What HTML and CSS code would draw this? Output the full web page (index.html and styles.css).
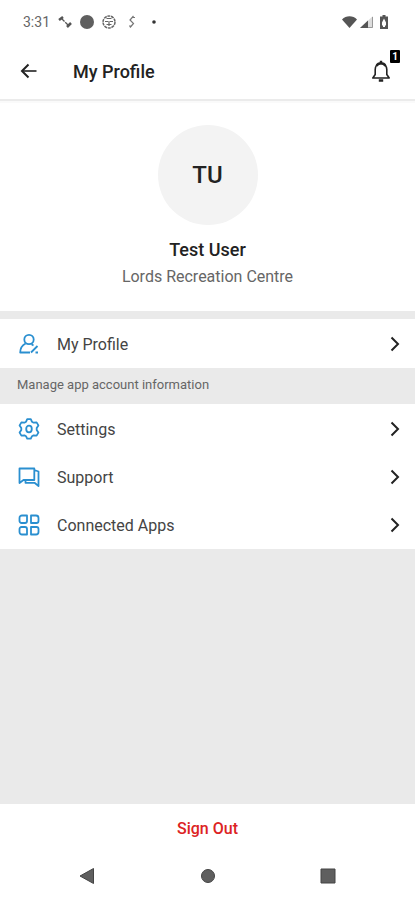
FILE: index.html
```
<!DOCTYPE html>
<html lang="en">
<head>
  <meta charset="UTF-8">
  <meta name="viewport" content="width=device-width, initial-scale=1.0">
  <title>My Profile</title>
  <link rel="stylesheet" href="styles.css">
</head>
<body>
  <div class="status-bar">
    <span class="time">3:31</span>
    <svg width="14" height="14" viewBox="0 0 14 14" fill="none" stroke="#555"><path d="M3 3l8 8" stroke-width="1.3" stroke-dasharray="5 1"/><path d="M1 5l4-3M9 12l4-4" stroke-width="2.500"/></svg>
    <svg width="14" height="14" viewBox="0 0 14 14"><circle cx="7" cy="7" r="7" fill="#5f5f5f"/></svg>
    <svg width="14" height="14" viewBox="0 0 14 14" fill="none" stroke="#666"><circle cx="7" cy="7" r="6" stroke-width="1.500" stroke-dasharray="3 .7"/><path d="M3 6.500h3M8 6.500h3M4.500 3.500h5M7 6v5M4.500 9.500h5" stroke-width="1.200"/></svg>
    <svg class="bolt-icon" width="8" height="14" viewBox="0 0 8 14" fill="none" stroke="#777"><path d="M5.500 1L2 5l3.500 3.500L2 12.500M4 2.500h3M1 11h3" stroke-width="1.200"/></svg>
    <svg width="4" height="4" viewBox="0 0 4 4"><circle cx="2" cy="2" r="1.800" fill="#333"/></svg>
    <div class="status-right">
      <svg width="15" height="12" viewBox="0 0 15 12"><path d="M0 3.500C4-.8 11-.8 15 3.500L7.500 12z" fill="#555"/></svg>
      <svg width="13" height="12" viewBox="0 0 13 12"><path d="M13 0v12H0z" fill="#ddd"/><path d="M8 4.600V12H0z" fill="#555"/><path d="M12.500 1v10.500H8" fill="none" stroke="#999"/></svg>
      <svg class="battery-icon" width="8" height="14" viewBox="0 0 8 14"><path d="M2.500 0h3v1.500H8V14H0V1.500h2.500z" fill="#555"/><path d="M4 3.500L6 7.500v3H5v1.500H3v-1.500H2v-3z" fill="#fff"/></svg>
    </div>
  </div>

  <header class="header">
    <button class="icon-btn" aria-label="Back">
      <svg width="18" height="16" viewBox="0 0 18 16" fill="none" stroke="#222"><path d="M8.500 1.500L2 8l6.500 6.500" stroke-width="2"/><path d="M2 8h14.500" stroke-width="1.600"/></svg>
    </button>
    <h1>My Profile</h1>
    <button class="icon-btn bell" aria-label="Notifications">
      <svg width="20" height="22" viewBox="0 0 20 22" fill="none" stroke="#222" stroke-width="1.600"><path d="M1.800 18h16.400l-2.400-3.500V9.500C15.800 6 13.500 3.500 10 3.500S4.200 6 4.200 9.500v5z" stroke-linejoin="round"/><path d="M5.500 6C6.500 4.200 8 3.300 10 3.300s3.500.9 4.500 2.700M10 .8v2.500M7.800 20.500h4.400" stroke-width="2.400"/></svg>
      <span class="badge">1</span>
    </button>
  </header>

  <main>
    <section class="profile">
      <div class="avatar">TU</div>
      <h2>Test User</h2>
      <p>Lords Recreation Centre</p>
    </section>

    <nav class="menu">
      <a class="row" href="#profile">
        <svg class="row-icon" viewBox="0 0 22 22"><circle cx="11" cy="6.500" r="4.700"/><path d="M7.600 10.500C4.200 12.300 2.200 15.500 2.200 19.500H12M13.500 11.200l2 1.200M13 19.500l6.500-6.500M17.500 19.500h2.500"/></svg>
        <span>My Profile</span>
        <svg class="chevron" viewBox="0 0 10 16"><path d="M1.500 1.500L8 8l-6.500 6.500"/></svg>
      </a>
    </nav>

    <p class="note">Manage app account information</p>

    <nav class="menu">
      <a class="row" href="#settings">
        <svg class="row-icon" viewBox="0 0 22 22"><path d="M8 3.800L9.200 1.200h3.600L14 3.800l1.600.9 3-.3 1.800 3-1.700 2.600v2l1.700 2.600-1.800 3-3-.3-1.600.9-1.200 2.500H9.200L8 18.200l-1.600-.9-3 .3-1.800-3L3.300 12v-2L1.600 7.400l1.800-3 3 .3z"/><ellipse cx="11" cy="11" rx="2.800" ry="3.300"/></svg>
        <span>Settings</span>
        <svg class="chevron" viewBox="0 0 10 16"><path d="M1.500 1.500L8 8l-6.500 6.500"/></svg>
      </a>
      <a class="row" href="#support">
        <svg class="row-icon" viewBox="0 0 22 22"><path d="M1.500 17V2.500h14.800v11.500H5.500zM16.300 4l4.200 1.500V20l-4-3.200H7.500V14"/></svg>
        <span>Support</span>
        <svg class="chevron" viewBox="0 0 10 16"><path d="M1.500 1.500L8 8l-6.500 6.500"/></svg>
      </a>
      <a class="row" href="#apps">
        <svg class="row-icon" viewBox="0 0 22 22"><path d="M4 1.500h5v5.500a2 2 0 0 1-2 2H3.500a2 2 0 0 1-2-2V4A2.500 2.500 0 0 1 4 1.500zM13 1.500h5A2.500 2.500 0 0 1 20.500 4v3a2 2 0 0 1-2 2H13zM3.500 13H7a2 2 0 0 1 2 2v5.500H4A2.500 2.500 0 0 1 1.500 18v-3a2 2 0 0 1 2-2zM13 13h5.500a2 2 0 0 1 2 2v3a2.500 2.500 0 0 1-2.500 2.500h-5z"/></svg>
        <span>Connected Apps</span>
        <svg class="chevron" viewBox="0 0 10 16"><path d="M1.500 1.500L8 8l-6.500 6.500"/></svg>
      </a>
    </nav>
  </main>

  <footer>
    <button class="sign-out">Sign Out</button>
    <div class="nav-bar">
      <button aria-label="Back"><svg width="16" height="16" viewBox="0 0 16 16"><path d="M1 8L14.500 .5v15z"/></svg></button>
      <button aria-label="Home"><svg width="16" height="16" viewBox="0 0 16 16"><circle cx="8" cy="8" r="6.500"/></svg></button>
      <button aria-label="Recent apps"><svg width="16" height="16" viewBox="0 0 16 16"><path d="M1 1h14v14H1z"/></svg></button>
    </div>
  </footer>
</body>
</html>
```

FILE: styles.css
```
* {
  box-sizing: border-box;
}
body {
  margin: 0;
  min-height: 100vh;
  display: flex;
  flex-direction: column;
  font-family: Roboto, "Liberation Sans", sans-serif;
  background: #eaeaea;
  color: #222;
}
h1, h2, p {
  margin: 0;
}
button {
  border: 0;
  padding: 0;
  background: none;
  font-family: inherit;
  cursor: pointer;
}
svg {
  display: block;
  flex: none;
}
.status-bar {
  display: flex;
  align-items: center;
  gap: 8px;
  height: 43px;
  padding: 0 27px 0 23px;
  background: #fff;
}
.time {
  font-size: 14px;
  color: #666;
}
.bolt-icon {
  margin: 0 8px 0 4px;
}
.status-right {
  display: flex;
  align-items: center;
  gap: 3px;
  margin-left: auto;
}
.battery-icon {
  margin-left: 4px;
}
.header {
  display: flex;
  align-items: center;
  height: 58px;
  padding: 0 24px 0 20px;
  background: #fff;
  border-bottom: 2px solid #ebebeb;
}
.header h1 {
  flex: 1;
  margin-left: 35px;
  font-size: 18px;
  font-weight: 500;
}
.bell {
  position: relative;
}
.badge {
  position: absolute;
  top: -10px;
  right: -9px;
  width: 10px;
  border-radius: 1px;
  background: #000;
  color: #fff;
  font-size: 10px;
  font-weight: 700;
  line-height: 13px;
  text-align: center;
}
.profile {
  display: flex;
  flex-direction: column;
  align-items: center;
  padding: 22px 16px 22px;
  background: #fff;
  border-top: 2px solid #fafafa;
  border-bottom: 8px solid #eaeaea;
}
.avatar {
  display: flex;
  align-items: center;
  justify-content: center;
  width: 100px;
  height: 100px;
  border-radius: 50%;
  background: #f3f3f3;
  font-size: 24px;
  font-weight: 500;
}
.profile h2 {
  margin-top: 12px;
  font-size: 18px;
  font-weight: 500;
  line-height: 26px;
}
.profile p {
  margin-top: 2px;
  font-size: 16px;
  line-height: 24px;
  color: #666;
}
.menu {
  background: #fff;
  padding-top: 1px;
}
.row {
  display: flex;
  align-items: center;
  gap: 17px;
  height: 48px;
  padding: 0 15px 0 18px;
  color: #444;
  font-size: 16px;
  text-decoration: none;
}
.row span {
  flex: 1;
}
.row-icon {
  width: 22px;
  height: 22px;
  fill: none;
  stroke: #2a8fd0;
  stroke-width: 1.8;
  stroke-linejoin: round;
}
.chevron {
  width: 10px;
  height: 16px;
  fill: none;
  stroke: #222;
  stroke-width: 2;
}
.note {
  padding: 0 17px 2px;
  font-size: 13px;
  line-height: 34px;
  color: #666;
}
footer {
  margin-top: auto;
  background: #fff;
}
.sign-out {
  display: block;
  width: 100%;
  height: 48px;
  color: #dc2323;
  font-size: 16px;
  font-weight: 500;
}
.nav-bar {
  display: flex;
  justify-content: space-between;
  height: 48px;
  padding: 0 79px;
}
.nav-bar svg {
  fill: #5f5f5f;
  stroke: #444;
}
```
